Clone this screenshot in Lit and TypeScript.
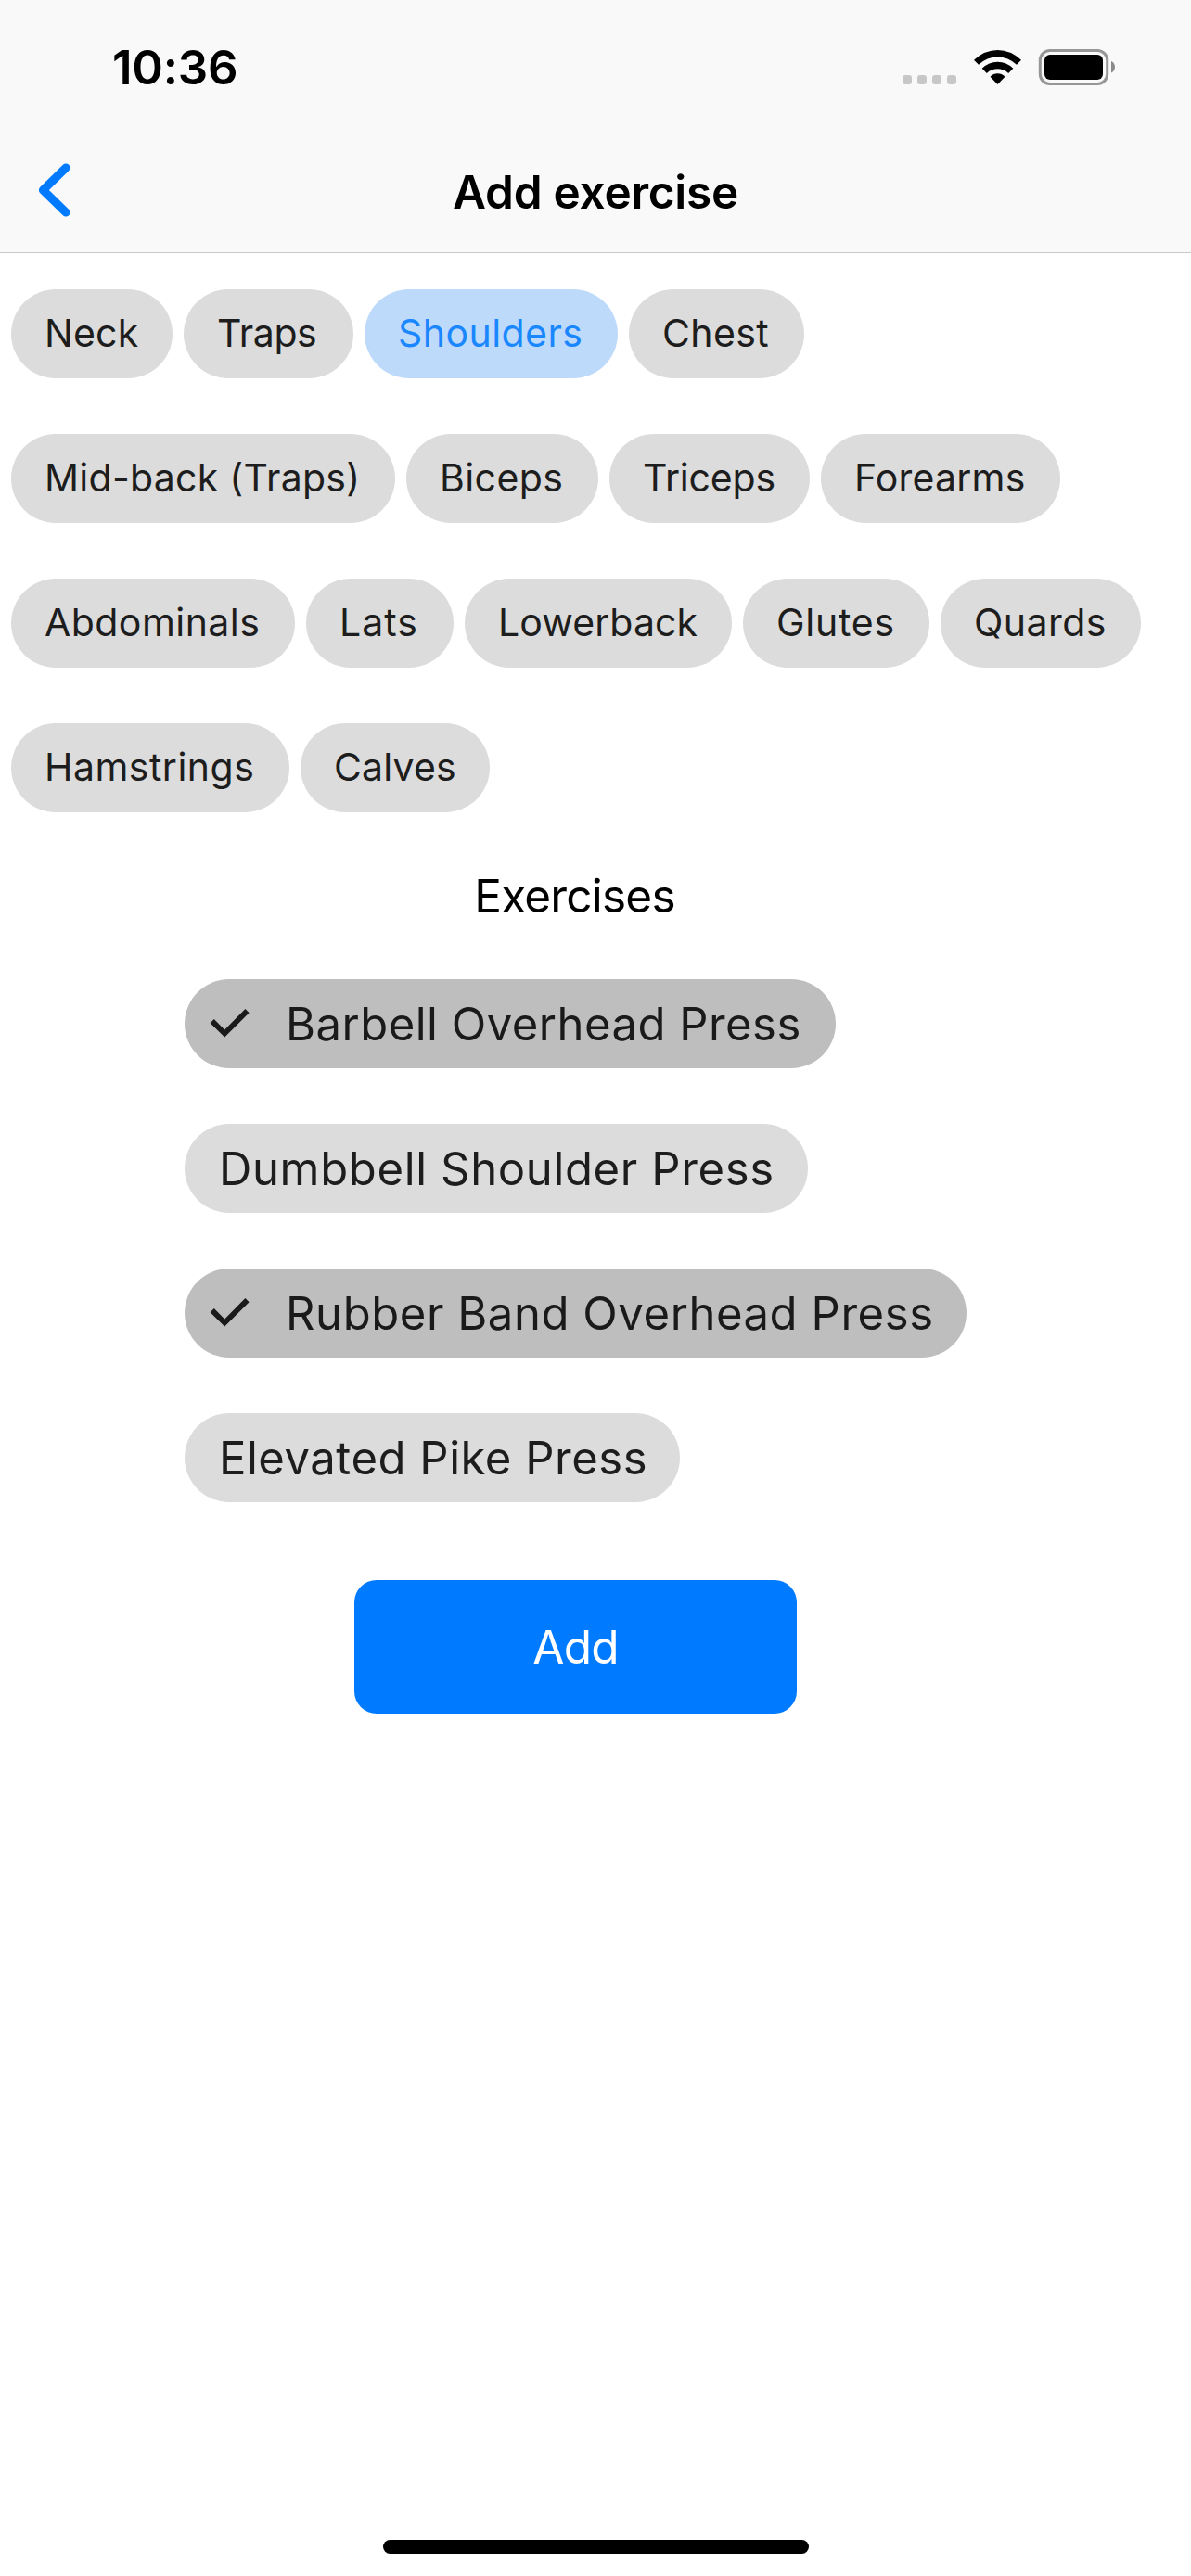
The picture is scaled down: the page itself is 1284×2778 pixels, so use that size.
import { LitElement, html, css } from "lit";
import { customElement, property, state } from "lit/decorators.js";
import { classMap } from "lit/directives/class-map.js";
import { styleMap } from "lit/directives/style-map.js";

interface ChipItem {
  label: string;
  width: number;
  tracking: number;
}

const MUSCLES: ChipItem[] = [
  { label: "Neck", width: 174, tracking: 0.15 },
  { label: "Traps", width: 183, tracking: -0.4 },
  { label: "Shoulders", width: 273, tracking: 0.45 },
  { label: "Chest", width: 189, tracking: 0.4 },
  { label: "Mid-back (Traps)", width: 414, tracking: 0.27 },
  { label: "Biceps", width: 207, tracking: 0.4 },
  { label: "Triceps", width: 216, tracking: -0.2 },
  { label: "Forearms", width: 258, tracking: 0.2 },
  { label: "Abdominals", width: 306, tracking: 0.45 },
  { label: "Lats", width: 159, tracking: 1 },
  { label: "Lowerback", width: 288, tracking: 0.1 },
  { label: "Glutes", width: 201, tracking: 0.75 },
  { label: "Quards", width: 216, tracking: 0.45 },
  { label: "Hamstrings", width: 300, tracking: 0.48 },
  { label: "Calves", width: 204, tracking: 0.15 },
];

const EXERCISES: ChipItem[] = [
  { label: "Barbell Overhead Press", width: 702, tracking: 0.48 },
  { label: "Dumbbell Shoulder Press", width: 672, tracking: 0.64 },
  { label: "Rubber Band Overhead Press", width: 843, tracking: 0.56 },
  { label: "Elevated Pike Press", width: 534, tracking: 0.52 },
];

@customElement("status-bar")
export class StatusBar extends LitElement {
  static styles = css`
    :host {
      display: flex;
      justify-content: space-between;
      height: 141px;
      box-sizing: border-box;
      padding: 42px 80px 0 121px;
    }
    .time {
      font-size: 51px;
      font-weight: 600;
      line-height: 61px;
      letter-spacing: -0.2px;
    }
    .icons {
      display: block;
      width: 232px;
      height: 60px;
    }
  `;

  render() {
    return html`
      <div class="time">10:36</div>
      <svg class="icons" viewBox="972 42 232 60">
        <g fill="#c7c7c7">
          <rect x="973" y="81" width="10" height="10" rx="3" />
          <rect x="989" y="81" width="10" height="10" rx="3" />
          <rect x="1005" y="81" width="10" height="10" rx="3" />
          <rect x="1021" y="81" width="10" height="10" rx="3" />
        </g>
        <g fill="#000">
          <path d="M1050 64.7 Q1061.5 54 1075.5 54 Q1089.5 54 1101 64.7 L1096 69.7 Q1087 61.4 1075.5 61.4 Q1064 61.4 1055 69.7 Z" />
          <path d="M1058.7 73.7 Q1066 66.7 1075.5 66.7 Q1085 66.7 1092.3 73.7 L1087.2 78.9 Q1082 74.3 1075.5 74.3 Q1069 74.3 1063.8 78.9 Z" />
          <path d="M1067.5 82.7 Q1071 79.3 1075.5 79.3 Q1080 79.3 1083.5 82.7 L1075.5 91 Z" />
        </g>
        <rect x="1121.3" y="54.5" width="72.4" height="36" rx="10.5" fill="none" stroke="#979797" stroke-width="3" />
        <rect x="1126" y="59" width="63" height="27" rx="6" fill="#000" />
        <path d="M1198 66 C1203.3 68 1203.3 76.5 1198 78.5 Z" fill="#8b8b8b" />
      </svg>
    `;
  }
}

@customElement("nav-bar")
export class NavBar extends LitElement {
  @property() heading = "";

  static styles = css`
    :host {
      display: grid;
      grid-template-columns: 1fr auto 1fr;
      align-items: start;
      height: 131px;
      border-bottom: 1px solid #c9c9c9;
    }
    .back {
      justify-self: start;
      border: 0;
      padding: 35px 0 0 41px;
      background: none;
      line-height: 0;
    }
    .title {
      margin: 0;
      padding-top: 36px;
      font-size: 49.5px;
      font-weight: 600;
      line-height: 60px;
      letter-spacing: -0.25px;
    }
  `;

  render() {
    return html`
      <button class="back" aria-label="Back">
        <svg width="35" height="58" viewBox="0 0 35 58" fill="none" stroke="#007aff" stroke-width="9" stroke-linecap="round" stroke-linejoin="round">
          <path d="M30 5 L5.4 29 L30 53" />
        </svg>
      </button>
      <h1 class="title">${this.heading}</h1>
    `;
  }
}

@customElement("choice-chip")
export class ChoiceChip extends LitElement {
  @property({ attribute: false }) item!: ChipItem;
  @property({ type: Boolean }) active = false;
  @property({ type: Boolean }) checked = false;
  @property({ type: Boolean }) large = false;

  static styles = css`
    :host {
      display: block;
    }
    .chip {
      display: flex;
      align-items: center;
      height: 96px;
      box-sizing: border-box;
      padding: 0 0 2px 36px;
      border: 0;
      border-radius: 48px;
      background: #dcdcdc;
      color: #1d1d1d;
      font: 400 41px Inter, "Liberation Sans", sans-serif;
      white-space: nowrap;
    }
    .active {
      background: #bedafb;
      color: #1a87ff;
    }
    .large {
      font-size: 49px;
      padding: 0 0 0 37px;
    }
    .checked {
      background: #bebebe;
      color: #1a1a1a;
      padding-left: 27px;
    }
    .check {
      flex: none;
      width: 43px;
      height: 32px;
      margin: 0 39px 2px 0;
    }
  `;

  render() {
    const classes = { chip: true, active: this.active, large: this.large, checked: this.checked };
    const box = {
      width: `${this.item.width}px`,
      letterSpacing: `${this.item.tracking}px`,
    };
    return html`
      <button class=${classMap(classes)} style=${styleMap(box)}>
        ${this.checked
          ? html`<svg class="check" viewBox="0 0 43 32" fill="#1a1a1a">
              <path d="M0.6 16.3 L4.8 12 L16.2 23.4 L38.4 1 L42.6 5.2 L16.2 31.6 Z" />
            </svg>`
          : null}
        <span>${this.item.label}</span>
      </button>
    `;
  }
}

@customElement("app-root")
export class AppRoot extends LitElement {
  @state() private muscle = "Shoulders";
  @state() private picked = ["Barbell Overhead Press", "Rubber Band Overhead Press"];

  static styles = css`
    :host {
      display: flex;
      flex-direction: column;
      width: 1284px;
      height: 2778px;
      background: #fff;
      color: #000;
      font-family: Inter, "Liberation Sans", sans-serif;
    }
    .header {
      background: #f9f9f9;
    }
    .content {
      display: flex;
      flex: 1;
      flex-direction: column;
    }
    .muscles {
      display: flex;
      flex-wrap: wrap;
      gap: 60px 12px;
      padding: 39px 12px 0;
    }
    .subtitle {
      width: 1239px;
      margin: 60px 0 0;
      font-size: 49.5px;
      font-weight: 400;
      line-height: 60px;
      letter-spacing: -0.8px;
      text-align: center;
    }
    .exercises {
      display: flex;
      flex-direction: column;
      align-items: flex-start;
      gap: 60px;
      padding: 60px 0 0 199px;
    }
    .add {
      width: 477px;
      height: 144px;
      margin: 84px 0 0 382px;
      padding: 0;
      border: 0;
      border-radius: 24px;
      background: #007aff;
      color: #fff;
      font: 400 49.5px Inter, "Liberation Sans", sans-serif;
      letter-spacing: -0.8px;
    }
    .home {
      width: 459px;
      height: 15px;
      margin: 0 auto 24px 413px;
      border-radius: 8px;
      background: #000;
    }
  `;

  private toggle(label: string) {
    this.picked = this.picked.includes(label)
      ? this.picked.filter((p) => p !== label)
      : [...this.picked, label];
  }

  render() {
    return html`
      <header class="header">
        <status-bar></status-bar>
        <nav-bar heading="Add exercise"></nav-bar>
      </header>
      <main class="content">
        <div class="muscles">
          ${MUSCLES.map(
            (m) => html`<choice-chip
              .item=${m}
              ?active=${m.label === this.muscle}
              @click=${() => (this.muscle = m.label)}
            ></choice-chip>`
          )}
        </div>
        <h2 class="subtitle">Exercises</h2>
        <div class="exercises">
          ${EXERCISES.map(
            (e) => html`<choice-chip
              large
              .item=${e}
              ?checked=${this.picked.includes(e.label)}
              @click=${() => this.toggle(e.label)}
            ></choice-chip>`
          )}
        </div>
        <button class="add">Add</button>
      </main>
      <div class="home"></div>
    `;
  }
}
